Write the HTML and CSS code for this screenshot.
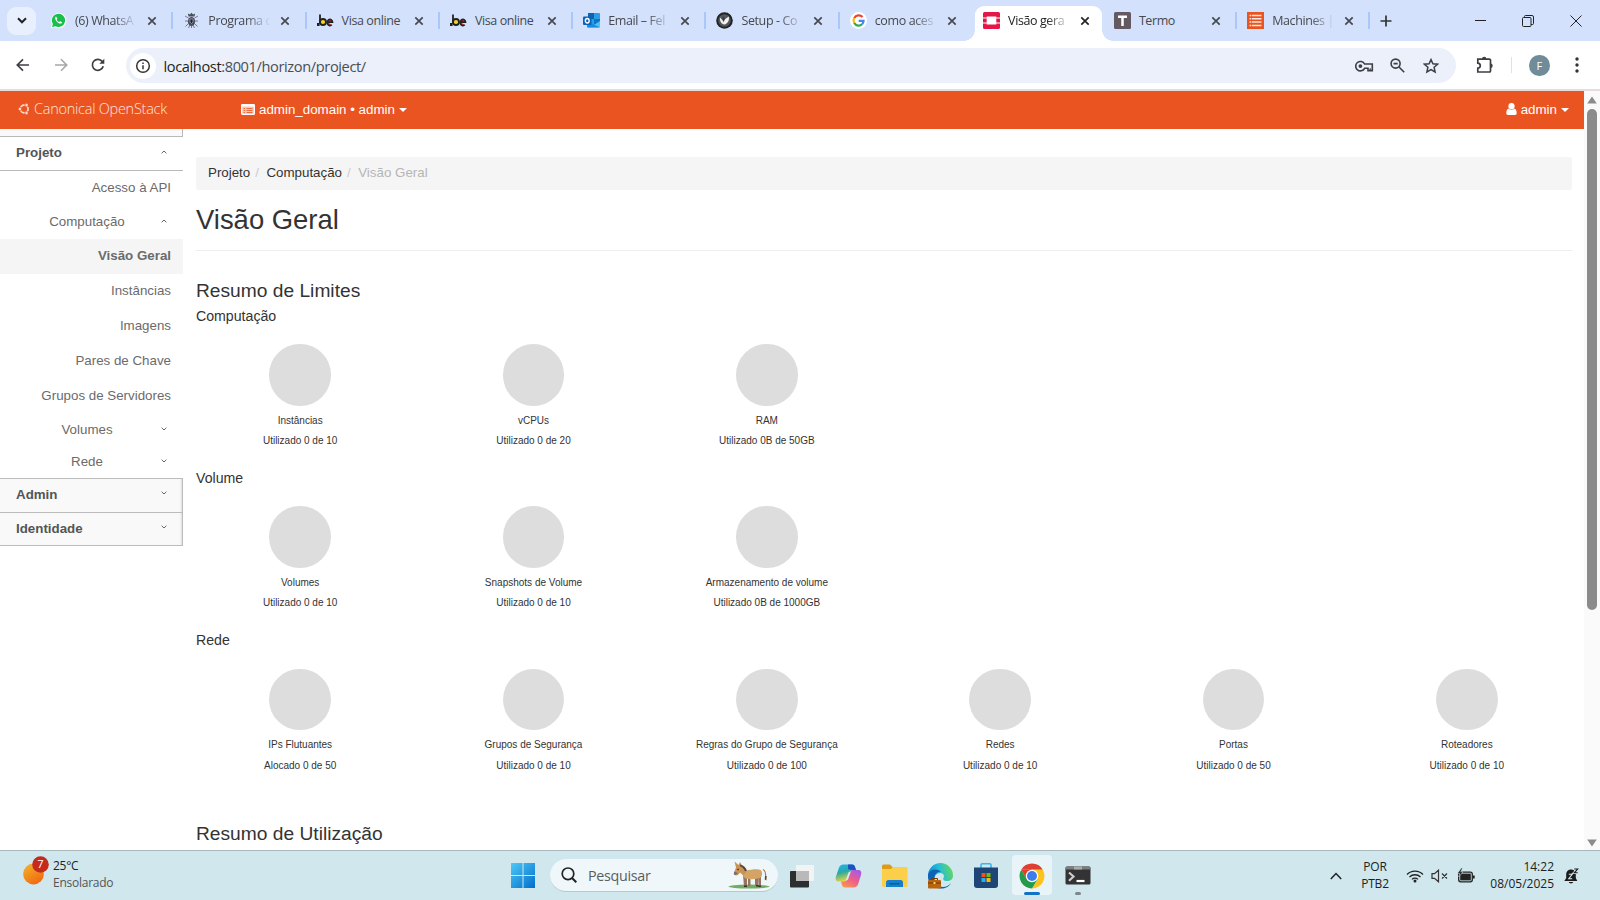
FILE: index.html
```html
<!DOCTYPE html>
<html lang="pt-BR">
<head>
<meta charset="utf-8">
<title>Visão geral</title>
<link rel="stylesheet" href="styles.css">
</head>
<body>
<svg width="0" height="0" class="defs">
  <symbol id="x" viewBox="0 0 10 10"><path d="M1.3 1.3l7.4 7.4M8.7 1.3L1.3 8.7" stroke="currentColor" stroke-width="1.7" fill="none"/></symbol>
  <symbol id="up" viewBox="0 0 6 4"><path d="M.6 3.3L3 1l2.400 2.300" stroke="currentColor" fill="none"/></symbol>
  <symbol id="down" viewBox="0 0 6 4"><path d="M.6 .7L3 3l2.400-2.300" stroke="currentColor" fill="none"/></symbol>
  <symbol id="be" viewBox="0 0 17 17"><path d="M3 2.500v9" stroke="#222" stroke-width="1.800"/><rect x="0" y="11" width="2.600" height="3" fill="#222"/><circle cx="6" cy="10" r="3" fill="#f5d522" stroke="#222" stroke-width="1.800"/><path d="M10.500 10.200h5a2.600 3.100 0 1 0-.8 2.600" fill="#e2363c" stroke="#222" stroke-width="1.700"/></symbol>
  <symbol id="g" viewBox="0 0 18 18"><circle cx="9" cy="9" r="9" fill="#fff"/><g fill="none" stroke-width="2.400"><path d="M13.200 5.400A5.300 5.300 0 0 0 4.500 6.300" stroke="#ea4335"/><path d="M4.500 6.300a5.300 5.300 0 0 0 0 5.400" stroke="#fbbc05"/><path d="M4.500 11.700a5.300 5.300 0 0 0 8.300 1.300" stroke="#34a853"/><path d="M12.800 13a5.300 5.300 0 0 0 1.500-3.500H9.200" stroke="#4285f4"/></g></symbol>
</svg>

<header class="tabs">
  <div class="tabmenu"><svg width="10" height="7" viewBox="0 0 10 7"><path d="M1 1.300l4 4 4-4" stroke="#222" stroke-width="2" fill="none"/></svg></div>
  <div class="tab"><svg class="fav" viewBox="0 0 17 17"><path d="M.8 16.300l1.200-4.300A7.600 7.600 0 1 1 5 15.200z" fill="#fff"/><path d="M2 15.100l.9-3.200A6.600 6.600 0 1 1 5.400 14.200z" fill="#18bf4c"/><path d="M6 4.500c-1.800 1.200-.3 4 1.200 5.400 1.700 1.600 4 2.500 5 .5l-1.900-1.200-1.200.9c-1.200-.5-2-1.300-2.500-2.400l.8-1z" fill="#fff"/></svg><span class="title fade">(6) WhatsA</span><svg class="close"><use href="#x"/></svg></div>
  <div class="tab"><svg class="fav" viewBox="0 0 17 17"><g stroke="#6b717d" stroke-width=".9" fill="none"><path d="M5.500 6L2 4M11.500 6L15 4M5 9H2M12 9h3M5.500 11.500L2.500 14.500M11.500 11.500l3 3M7 13l-1.500 3M10 13l1.500 3M8.500 13v3"/></g><ellipse cx="8.500" cy="9.500" rx="3.600" ry="4.600" fill="#4a4f5a"/><path d="M5.500 4.500l-.6-3 2 1L8.500.8l1.600 1.700 2-1-.6 3z" fill="#4a4f5a"/><path d="M7 7h3v3l-1.500 1.500L7 10z" fill="#20232b" stroke="#b9c0cd" stroke-width=".6"/></svg><span class="title fade">Programa d</span><svg class="close"><use href="#x"/></svg></div>
  <div class="tab"><svg class="fav"><use href="#be"/></svg><span class="title">Visa online</span><svg class="close"><use href="#x"/></svg></div>
  <div class="tab"><svg class="fav"><use href="#be"/></svg><span class="title">Visa online</span><svg class="close"><use href="#x"/></svg></div>
  <div class="tab"><svg class="fav" viewBox="0 0 17 17"><rect x="5" y="1" width="12" height="12" rx="1" fill="#28a0e8"/><path d="M5 1h6v6H5z" fill="#0f62b0"/><path d="M11 7h6v5h-6z" fill="#1373c6"/><path d="M4 9l7 4 6-4v5.500a1 1 0 0 1-1 1H5a1 1 0 0 1-1-1z" fill="#4dc3f5"/><path d="M4 9l13 6.500H5a1 1 0 0 1-1-1z" fill="#168be0"/><rect y="4.500" width="8.500" height="8.500" rx="1" fill="#0764b9"/><ellipse cx="4.250" cy="8.750" rx="1.900" ry="2.200" fill="none" stroke="#fff" stroke-width="1.400"/></svg><span class="title fade">Email – Fel</span><svg class="close"><use href="#x"/></svg></div>
  <div class="tab"><svg class="fav" viewBox="0 0 17 17"><circle cx="8.500" cy="8.500" r="8.300" fill="#222327"/><circle cx="8.500" cy="8.500" r="6.300" fill="#55565a"/><path d="M4 5.500l3.500 4L9.200 7l3.600-2.500c.8 3.500-.5 6.500-3.800 8H8C5 11.500 3.500 8.500 4 5.500z" fill="#f2f2f2"/><path d="M6.500 4.500L9 6l-1.500 4.500z" fill="#36373b"/></svg><span class="title fade">Setup - Co</span><svg class="close"><use href="#x"/></svg></div>
  <div class="tab last"><svg class="fav"><use href="#g"/></svg><span class="title fade">como aces</span><svg class="close"><use href="#x"/></svg></div>
  <div class="tab active"><svg class="fav" viewBox="0 0 17 17"><path d="M1.500 0h14A1.500 1.500 0 0 1 17 1.500V5.500H13.300V4.500H3.700v1H0v-4A1.500 1.500 0 0 1 1.500 0zM0 6.500h3.700v4H0zM13.300 6.500H17v4h-3.700zM0 11.500h3.700v1h9.600v-1H17v4a1.500 1.500 0 0 1-1.500 1.500h-14A1.500 1.500 0 0 1 0 15.500z" fill="#e5164a"/></svg><span class="title fade">Visão gera</span><svg class="close"><use href="#x"/></svg></div>
  <div class="tab"><svg class="fav" viewBox="0 0 17 17"><rect width="17" height="17" rx="1.500" fill="#645861"/><path d="M4 4.800h9M8.500 4v10" stroke="#fff" stroke-width="2.500"/></svg><span class="title">Termo</span><svg class="close"><use href="#x"/></svg></div>
  <div class="tab"><svg class="fav" viewBox="0 0 17 17"><rect width="17" height="17" fill="#e95420"/><path d="M2.500 3.500h12M2.500 6.800h12M2.500 10.100h12M2.500 13.400h12" stroke="#ffe6dc" stroke-width="1.500"/><path d="M4.500 2v13" stroke="#e95420" stroke-width=".7"/></svg><span class="title fade">Machines |</span><svg class="close"><use href="#x"/></svg></div>
  <svg class="plus" width="12" height="12" viewBox="0 0 12 12"><path d="M6 .5v11M.5 6h11" stroke="#333" stroke-width="1.700"/></svg>
  <div class="winctl">
    <svg width="11" height="12" viewBox="0 0 11 12"><path d="M0 5.500h11" stroke="#222"/></svg>
    <svg width="12" height="12" viewBox="0 0 12 12"><g fill="none" stroke="#222"><rect x=".5" y="2.500" width="8.500" height="9" rx="1"/><path d="M2.500 2.500V1.500a1 1 0 0 1 1-1H10a1.500 1.500 0 0 1 1.500 1.500v6.500a1 1 0 0 1-1 1H9"/></g></svg>
    <svg width="12" height="12" viewBox="0 0 12 12"><path d="M.5.5l11 11M11.500.5l-11 11" stroke="#222"/></svg>
  </div>
</header>

<nav class="toolbar">
  <svg class="tb" width="14" height="14" viewBox="0 0 14 14"><path d="M13 7H1.500M7 1.300L1.300 7 7 12.700" stroke="#3c3f43" stroke-width="1.700" fill="none"/></svg>
  <svg class="tb" width="14" height="14" viewBox="0 0 14 14"><path d="M1 7h11.500M7 1.300L12.700 7 7 12.700" stroke="#a4a6a9" stroke-width="1.600" fill="none"/></svg>
  <svg class="tb" width="14" height="14" viewBox="0 0 14 14"><path d="M12.200 8.200A5.500 5.500 0 1 1 11.300 3.500L12.300 4.600" stroke="#3c3f43" stroke-width="1.700" fill="none"/><path d="M13.300.7v5H8.300z" fill="#3c3f43"/></svg>
  <div class="omnibox">
    <span class="info"><svg width="16" height="16" viewBox="0 0 16 16"><circle cx="8" cy="8" r="6.300" stroke="#333" stroke-width="1.500" fill="none"/><path d="M8 7.200v4M8 4.500v1.600" stroke="#333" stroke-width="1.500"/></svg></span>
    <span class="url"><b>localhost</b>:8001/horizon/project/</span>
    <svg width="20" height="12" viewBox="0 0 20 12"><g fill="none" stroke="#3c3f43" stroke-width="1.600"><path d="M9.600 4A4.700 4.700 0 1 0 9.600 8.300H13v2.300h4.300V4z"/><path d="M15.200 10.500V8.300" stroke-width="1.200"/></g><circle cx="5.400" cy="6.100" r="1.900" fill="#3c3f43"/></svg>
    <svg class="lens" width="15" height="15" viewBox="0 0 15 15"><g fill="none" stroke="#3c3f43" stroke-width="1.600"><circle cx="5.600" cy="5.600" r="4.500"/><path d="M9 9l5.200 5.200M3.500 5.600h4.200"/></g></svg>
    <svg class="star" width="16" height="16" viewBox="0 0 16 16"><path d="M8 1.600l1.900 4.200 4.700.4-3.500 3.100 1 4.600L8 11.500l-4.100 2.400 1-4.600-3.500-3.100 4.700-.4z" stroke="#3c3f43" stroke-width="1.500" fill="none"/></svg>
  </div>
  <svg class="ext" width="18" height="18" viewBox="0 0 18 18"><path d="M1.800 3.200H13.500a1 1 0 0 1 1 1V15a1 1 0 0 1-1 1H1.800v-3.800c3.300-.4 3.300-4.600 0-5z" fill="none" stroke="#3c3f43" stroke-width="1.700"/><path d="M6 3a2.200 2.200 0 0 1 4.400 0zM14.500 7.500a2.200 2.200 0 0 1 0 4.400z" fill="#3c3f43"/></svg>
  <i class="tbsep"></i>
  <span class="avatar">F</span>
  <svg class="dots" width="4" height="16" viewBox="0 0 4 16"><g fill="#333"><circle cx="2" cy="2" r="1.700"/><circle cx="2" cy="8" r="1.700"/><circle cx="2" cy="14" r="1.700"/></g></svg>
</nav>

<div class="viewport">
  <div class="page">
    <div class="topbar">
      <svg class="cof" width="12" height="12" viewBox="0 0 12 12"><circle cx="6.200" cy="6" r="3.900" fill="none" stroke="#ffdccf" stroke-width="1.700"/><g fill="#ffdccf" stroke="#e95420" stroke-width=".7"><circle cx="1.900" cy="6" r="1.700"/><circle cx="8.500" cy="2" r="1.700"/><circle cx="8.500" cy="10" r="1.700"/></g></svg>
      <span class="brand">Canonical OpenStack</span>
      <div class="project"><svg width="14" height="11" viewBox="0 0 14 11"><rect x=".6" y=".6" width="12.800" height="9.800" rx="1" fill="#f9c9b8" stroke="#fff" stroke-width="1.200"/><path d="M0 1.500h14" stroke="#fff" stroke-width="2"/><path d="M2.500 4.500h1.500M5.500 4.500h6M2.500 6.500h1.500M5.500 6.500h6M2.500 8.500h1.500M5.500 8.500h6" stroke="#e95420" stroke-width=".8"/></svg><span>admin_domain • admin</span><i class="caret"></i></div>
      <div class="user"><svg width="11" height="12" viewBox="0 0 11 12"><circle cx="5.500" cy="3.200" r="3.100" fill="#fff"/><path d="M2.500 5.500C.8 6 .3 8 .3 10.300.3 11.300 1 12 2 12h7c1 0 1.700-.7 1.700-1.700 0-2.300-.5-4.300-2.200-4.800a4 4 0 0 1-6 0z" fill="#fff"/></svg><span>admin</span><i class="caret"></i></div>
    </div>
    <div class="body">
      <aside class="side">
        <div class="stub"></div>
        <div class="panel open">Projeto<svg class="chev"><use href="#up"/></svg></div>
        <div class="item">Acesso à API</div>
        <div class="group g1">Computação<svg class="chev"><use href="#up"/></svg></div>
        <div class="item current">Visão Geral</div>
        <div class="item">Instâncias</div>
        <div class="item">Imagens</div>
        <div class="item">Pares de Chave</div>
        <div class="item">Grupos de Servidores</div>
        <div class="group">Volumes<svg class="chev"><use href="#down"/></svg></div>
        <div class="group">Rede<svg class="chev"><use href="#down"/></svg></div>
        <div class="panel shut">Admin<svg class="chev"><use href="#down"/></svg></div>
        <div class="panel shut">Identidade<svg class="chev"><use href="#down"/></svg></div>
      </aside>
      <main class="main">
        <div class="crumbs"><span>Projeto</span><i>/</i><span>Computação</span><i>/</i><em>Visão Geral</em></div>
        <h1>Visão Geral</h1>
        <h2>Resumo de Limites</h2>
        <section>
          <h3>Computação</h3>
          <div class="charts">
            <div class="chart"><div class="pie"></div><p>Instâncias</p><p>Utilizado 0 de 10</p></div>
            <div class="chart"><div class="pie"></div><p>vCPUs</p><p>Utilizado 0 de 20</p></div>
            <div class="chart"><div class="pie"></div><p>RAM</p><p>Utilizado 0B de 50GB</p></div>
          </div>
        </section>
        <section>
          <h3>Volume</h3>
          <div class="charts">
            <div class="chart"><div class="pie"></div><p>Volumes</p><p>Utilizado 0 de 10</p></div>
            <div class="chart"><div class="pie"></div><p>Snapshots de Volume</p><p>Utilizado 0 de 10</p></div>
            <div class="chart"><div class="pie"></div><p>Armazenamento de volume</p><p>Utilizado 0B de 1000GB</p></div>
          </div>
        </section>
        <section>
          <h3>Rede</h3>
          <div class="charts">
            <div class="chart"><div class="pie"></div><p>IPs Flutuantes</p><p>Alocado 0 de 50</p></div>
            <div class="chart"><div class="pie"></div><p>Grupos de Segurança</p><p>Utilizado 0 de 10</p></div>
            <div class="chart"><div class="pie"></div><p>Regras do Grupo de Segurança</p><p>Utilizado 0 de 100</p></div>
            <div class="chart"><div class="pie"></div><p>Redes</p><p>Utilizado 0 de 10</p></div>
            <div class="chart"><div class="pie"></div><p>Portas</p><p>Utilizado 0 de 50</p></div>
            <div class="chart"><div class="pie"></div><p>Roteadores</p><p>Utilizado 0 de 10</p></div>
          </div>
        </section>
        <h2 class="usage">Resumo de Utilização</h2>
      </main>
    </div>
  </div>
  <div class="scroll">
    <svg width="10" height="8" viewBox="0 0 10 8"><path d="M5 .5L9.800 7.500H.2z" fill="#8b8b8b"/></svg>
    <div class="thumb"></div>
    <svg width="10" height="8" viewBox="0 0 10 8"><path d="M5 7.500L9.800.5H.2z" fill="#8b8b8b"/></svg>
  </div>
</div>

<footer class="taskbar">
  <div class="weather">
    <svg width="27" height="29" viewBox="0 0 27 29"><defs><linearGradient id="sun" x1="0" y1="0" x2=".6" y2="1"><stop offset="0" stop-color="#f3b72c"/><stop offset="1" stop-color="#f26a12"/></linearGradient></defs><circle cx="10.500" cy="18" r="10.400" fill="url(#sun)"/><circle cx="17.500" cy="8.500" r="8.300" fill="#c42b1c"/><text x="17.500" y="12.200" class="badge">7</text></svg>
    <div><div class="temp">25°C</div><div class="cond">Ensolarado</div></div>
  </div>
  <div class="apps">
    <svg class="win" width="24" height="25" viewBox="0 0 24 25"><defs><linearGradient id="w" x1="0" y1="0" x2="24" y2="25" gradientUnits="userSpaceOnUse"><stop offset="0" stop-color="#4cc8f8"/><stop offset="1" stop-color="#036dcb"/></linearGradient></defs><path d="M0 0h11.500v12H0zM12.500 0H24v12H12.500zM0 13h11.500v12H0zM12.500 13H24v12H12.500z" fill="url(#w)"/></svg>
    <div class="search">
      <svg width="16" height="16" viewBox="0 0 16 16"><circle cx="7" cy="6.800" r="5.800" fill="none" stroke="#222" stroke-width="1.700"/><path d="M11 11l4.300 4.300" stroke="#222" stroke-width="2"/></svg>
      <span>Pesquisar</span>
      <svg width="42" height="28" viewBox="0 0 42 28"><ellipse cx="21" cy="25.600" rx="20.500" ry="2" fill="#6fae62"/><path d="M35 8.500c3 1 3 5 2.500 10" stroke="#a37b50" stroke-width="1.200" fill="none"/><path d="M37 15l1.700 0-.4 4.500-1.500-1z" fill="#5c4638"/><path d="M15 14h4v11.500h-3zM20 15h2.500v10H20zM27 15h3v9.500h-3zM30 14h3v11h-2.500z" fill="#96745f"/><path d="M13.500 8L18 9.500c5-1 12-2 14.500-.5 2.500 2 2 6.500-.5 8-5 1.300-10 1.500-13.500.7-3.500-1.300-4.500-4.200-5-9.700z" fill="#d3a465"/><path d="M8 6.500L6.500.5 10.500 4l1.500-3 2.500 4.500 4 5-3 4-3.500-3c-1.500 2.500-3.500 3.500-5.500 2.500-1.500-1 .5-4.500 1.500-7.500z" fill="#c89455"/><path d="M12 3.500c3.500.5 5.500 3 7 6l-2 .7c-1.200-2.700-2.800-4.200-5-5z" fill="#5c4638"/><path d="M6.300 10.500l3.500 1.500c-1.500 2.300-4 2.300-4 .5z" fill="#7c6a78"/><circle cx="10" cy="8.500" r=".8" fill="#222"/><path d="M16 24.500h3v1.500h-3zM28 24h2.500v1.500H28zM30.500 24.500H33V26h-2.500z" fill="#3b302f"/></svg>
    </div>
    <div class="app"><svg width="26" height="26" viewBox="0 0 26 26"><rect x="1" y="8" width="19" height="16.500" rx="1" fill="#2d2e30"/><rect x="7" y="2" width="18" height="16" rx="1" fill="#f4f4f4" opacity=".93"/><path d="M7 8h13v10H7z" fill="#b9b9ba"/></svg></div>
    <div class="app"><svg width="27" height="26" viewBox="0 0 27 26"><defs><linearGradient id="c1" x1="0" y1="0" x2=".3" y2="1"><stop offset="0" stop-color="#1fb6f2"/><stop offset=".5" stop-color="#2ba9a5"/><stop offset="1" stop-color="#e8d53c"/></linearGradient><linearGradient id="c2" x1=".8" y1="0" x2=".2" y2="1"><stop offset="0" stop-color="#a45ae8"/><stop offset=".5" stop-color="#ec5d8c"/><stop offset="1" stop-color="#fb9650"/></linearGradient></defs><path d="M10 1.500h7c2 0 2.600 1 3.200 3l.8 2.500h-3c-2 0-2.500 1-3 2.500L12.500 16c-.6 1.700-1.500 2.500-3.500 2.500H4c-3 0-3.800-2-3-5L4 4.500C5 2 7 1.500 10 1.500z" fill="url(#c1)"/><path d="M13 1.500h4c2 0 2.600 1 3.200 3l.8 2.500h-5l-3-1z" fill="#2150c5"/><path d="M17 24.500h-7c-2 0-2.600-1-3.200-3L6 18.500h3c2 0 2.500-1 3-2.500l2.500-6.500C15 8 16 7 18 7h5c3 0 3.800 2 3 5l-3 9.500c-1 2.500-3 3-6 3z" fill="url(#c2)"/><path d="M13.500 9.500L16 8l-3 8.500-2.500 1.500z" fill="#d7ebf0"/></svg></div>
    <div class="app"><svg width="27" height="25" viewBox="0 0 27 25"><path d="M1 3a1.500 1.500 0 0 1 1.500-1.500H9l3 3V8H1z" fill="#dd9c13"/><path d="M1 6h9l2-2h13.500a1 1 0 0 1 1 1v17.500a1.500 1.500 0 0 1-1.500 1.500H2.500A1.500 1.500 0 0 1 1 22.500z" fill="#fccf4b"/><path d="M5 24v-4.500A2.500 2.500 0 0 1 7.500 17h12a2.500 2.500 0 0 1 2.500 2.500V24z" fill="#1780ce"/><path d="M8.500 20h10v1.500h-10z" fill="#0f5c99"/></svg></div>
    <div class="app"><svg width="27" height="27" viewBox="0 0 27 27"><defs><linearGradient id="e" x1="0" y1=".6" x2="1" y2=".3"><stop offset="0" stop-color="#0b7fd0"/><stop offset=".5" stop-color="#27bcd8"/><stop offset="1" stop-color="#62d95c"/></linearGradient></defs><path d="M1 13.500a12.500 12.500 0 0 1 25 0c0 4-2.500 5.500-6 5.500-3 0-4.500-1.500-3.500-3 1.500-2.500-.5-5-3.500-5-4 0-6.500 4-5.500 8.500S12 25.500 14 26A12.500 12.500 0 0 1 1 13.500z" fill="url(#e)"/><path d="M1 13c2-6 9-7 13-3-4-1-7 3-6.500 7 .5 5 4 8 8.500 8 3.500 0 6.500-2 8-4-2 4-6 5.500-9.500 5.500A12.700 12.700 0 0 1 1 13z" fill="#0d62b6"/><rect x="1" y="18" width="13" height="8.500" rx="1" fill="#b9640f"/><path d="M4.500 18v-1.500h6V18M1 21h13" stroke="#70390a" fill="none"/><rect x="6.500" y="20" width="2" height="2" fill="#ffd35c"/></svg></div>
    <div class="app"><svg width="26" height="27" viewBox="0 0 26 27"><path d="M8 6V3a1.300 1.300 0 0 1 1.300-1.300h7.400A1.300 1.300 0 0 1 18 3v3" fill="none" stroke="#35b8ec" stroke-width="1.600"/><path d="M1 5.500h24V23a3 3 0 0 1-3 3H4a3 3 0 0 1-3-3z" fill="#1d4576"/><path d="M8.500 11H12.500V15H8.500z" fill="#f25022"/><path d="M13.500 11H17.500V15H13.500z" fill="#7fba00"/><path d="M8.500 16H12.500V20H8.500z" fill="#27aef0"/><path d="M13.500 16H17.500V20H13.500z" fill="#ffb900"/></svg></div>
    <div class="app on"><svg width="26" height="26" viewBox="0 0 26 26"><path d="M13 .5A12.500 12.500 0 0 1 23.800 6.750H13L2.200 6.750A12.500 12.500 0 0 1 13 .5z" fill="#dd3f31"/><path d="M2.200 6.750H13L7.600 16.200z" fill="#dd3f31"/><path d="M23.800 6.750A12.500 12.500 0 0 1 13 25.500L18.400 16.200 13 6.750z" fill="#fcc31e"/><path d="M13 25.500A12.500 12.500 0 0 1 2.200 6.750L7.600 16.200 18.400 16.200z" fill="#269a4a"/><circle cx="13" cy="13" r="6.200" fill="#fff"/><circle cx="13" cy="13" r="5" fill="#3b7ded"/></svg><i class="run"></i></div>
    <div class="app"><svg width="26" height="19" viewBox="0 0 26 19"><rect x=".5" y=".5" width="25" height="18" rx="1.500" fill="#333"/><path d="M.5 3.500V2A1.500 1.500 0 0 1 2 .5h22A1.500 1.500 0 0 1 25.500 2v1.500z" fill="#7d7d7d"/><path d="M9 .5h8v3H9z" fill="#aaa"/><path d="M4 6.500l4.500 4L4 14.800" stroke="#ccc" stroke-width="2.200" fill="none"/><path d="M11.500 15h8" stroke="#fff" stroke-width="2.200"/></svg><i class="run idle"></i></div>
  </div>
  <div class="tray">
    <svg class="tup" width="12" height="8" viewBox="0 0 12 8"><path d="M.8 7L6 1.500 11.200 7" stroke="#222" stroke-width="1.500" fill="none"/></svg>
    <div class="lang"><div>POR</div><div>PTB2</div></div>
    <svg class="wifi" width="18" height="14" viewBox="0 0 18 14"><g fill="none" stroke="#222" stroke-width="1.300"><path d="M1 5.500a11.300 11.300 0 0 1 16 0M3.500 8a7.800 7.800 0 0 1 11 0M6 10.400a4.300 4.300 0 0 1 6 0"/></g><circle cx="9" cy="12" r="1.500" fill="#222"/></svg>
    <svg class="vol" width="18" height="14" viewBox="0 0 18 14"><g fill="none" stroke="#333" stroke-width="1.200"><path d="M1 4.700h2.500L7.500 1.200v11.600L3.500 9.300H1zM11 4.500l5 5M16 4.500l-5 5"/></g></svg>
    <svg class="bat" width="18" height="15" viewBox="0 0 18 15"><rect x="1.700" y="4.200" width="13.600" height="9.600" rx="2" fill="none" stroke="#222" stroke-width="1.300"/><rect x="3.200" y="5.600" width="10.600" height="6.800" fill="#222"/><path d="M16 7.500h1.700v3H16z" fill="#222"/><path d="M4.300 0L.5 5.500h2.300L1.700 9 6 4H3.700L5.500 0z" fill="#222" stroke="#cfe7ed" stroke-width=".5"/></svg>
    <div class="clock"><div>14:22</div><div>08/05/2025</div></div>
    <svg class="bell" width="15" height="16" viewBox="0 0 15 16"><path d="M7 1.500c-3 0-4.800 2.300-4.800 5V10L.3 13h13L11.800 10V6.500c0-2.700-1.800-5-4.800-5zM4.700 14h4.600a2.400 2 0 0 1-4.600 0z" fill="#1c1c1c"/><path d="M10.300 1h3.400l-3.400 3.800h3.400" stroke="#cfe7ed" stroke-width="2.600" fill="none"/><path d="M10.300 1h3.400l-3.400 3.800h3.400" stroke="#1c1c1c" stroke-width="1.100" fill="none"/><path d="M4.800 6.300h3.400L4.800 10.700h3.400" stroke="#dceef2" stroke-width="1.100" fill="none"/></svg>
  </div>
</footer>
</body>
</html>
```
FILE: styles.css
```css
* { box-sizing: border-box; }
body { margin: 0; width: 1600px; height: 900px; overflow: hidden; display: flex; flex-direction: column; background: #fff; font-family: "Liberation Sans", Arial, sans-serif; color: #333; }
.defs { position: absolute; }
svg { flex: none; display: block; }
i { font-style: normal; }

.tabs { height: 41px; flex: none; display: flex; align-items: center; background: #d3e1fc; padding-left: 7px; font-family: "Open Sans", sans-serif; }
.tabmenu { width: 29px; height: 28px; border-radius: 9px; background: #e9f0fd; display: flex; align-items: center; justify-content: center; margin-right: 5px; }
.tab { width: 133.300px; height: 41px; flex: none; display: flex; align-items: center; padding-left: 9px; position: relative; color: #46494e; }
.tab::after { content: ""; position: absolute; right: 1px; top: 12px; width: 2px; height: 17px; background: #a9c7f9; }
.tab.last::after { display: none; }
.fav { width: 17px; height: 17px; margin-right: 8px; }
.title { width: 64px; white-space: nowrap; font-size: 12.500px; letter-spacing: -.4px; line-height: 20px; }
.fade { -webkit-mask-image: linear-gradient(90deg, #000 60%, transparent 98%); mask-image: linear-gradient(90deg, #000 60%, transparent 98%); }
.close { width: 10px; height: 10px; margin-left: 8px; }
.tab.active { color: #222; margin-right: -2.500px; }
.tab.active > * { z-index: 1; }
.tab.active::before { content: ""; position: absolute; left: 1px; top: 6px; width: 127px; height: 35px; background: #fff; border-radius: 9px 9px 0 0; }
.tab.active::after { left: -10px; right: auto; top: 30px; width: 149px; height: 11px; background: radial-gradient(circle at 0 0, transparent 10.500px, #fff 11px) left / 11px 11px no-repeat, radial-gradient(circle at 100% 0, transparent 10.500px, #fff 11px) right / 11px 11px no-repeat; }
.plus { margin-left: 9px; }
.winctl { display: flex; gap: 36px; margin-left: auto; padding-right: 18px; }

.toolbar { height: 48px; flex: none; display: flex; align-items: center; background: #fff; padding: 0 21px 0 16px; }
.tb { margin-right: 23.500px; }
.tb:nth-child(3) { margin-right: 20.500px; }
.omnibox { width: 1330px; height: 35px; margin-top: 1px; flex: none; border-radius: 18px; background: #ebf0fa; display: flex; align-items: center; padding: 0 17px 0 4px; }
.info { width: 26px; height: 26px; border-radius: 50%; background: #fff; display: flex; align-items: center; justify-content: center; margin-right: 8px; }
.url { font: 14.600px/22px "Open Sans", sans-serif; color: #4a4d51; flex: 1; letter-spacing: -.38px; }
.url b { font-weight: 400; color: #1d1f22; }
.lens { margin-left: 15px; }
.star { margin-left: 17.500px; }
.ext { margin-left: 20px; }
.tbsep { width: 2px; height: 16px; background: #d3e3fd; margin: 0 17px 0 17px; }
.avatar { width: 21px; height: 21px; border-radius: 50%; background: #6f8c98; color: #fff; font: 11px/21px "Open Sans", sans-serif; text-align: center; }
.dots { margin-left: 25.500px; }

.viewport { height: 761px; flex: none; display: flex; border-top: 2px solid #e6dcdb; }
.page { width: 1584px; overflow: hidden; }
.topbar { height: 38px; background: #e95420; color: #fff; display: flex; align-items: center; padding: 0 15px 2px 18px; font-size: 13.350px; }
.brand { font: 300 14.500px/20px "Open Sans", sans-serif; width: 207px; margin-left: 4px; white-space: nowrap; letter-spacing: -.25px; color: #ffe5dc; }
.project, .user { display: flex; align-items: center; }
.project span, .user span { margin: 0 4px 0 4px; line-height: 17px; }
.user { margin-left: auto; }
.caret { border: 4px solid transparent; border-top: 4.500px solid #fff; border-bottom: 0; margin-top: 1px; }

.body { display: flex; height: 721px; }
.side { width: 184px; flex: none; font-size: 13.330px; color: #6b6b6b; }
.stub { width: 183px; height: 8px; background: #f9f9f9; border: solid #b9b9b9; border-width: 0 1px 1px 0; }
.panel { position: relative; width: 183px; height: 33.500px; font-weight: 700; color: #555; padding-left: 16px; line-height: 31px; }
.open { border-bottom: 1px solid #b9b9b9; height: 34px; line-height: 32px; }
.shut { background: #f9f9f9; border: solid #bcbcbc; border-width: 1px 1px 0 0; box-shadow: inset -2px 0 2px -1px #ddd; }
.shut:last-child { border-bottom-width: 1px; height: 34px; }
.item { width: 183px; height: 34.900px; line-height: 34px; text-align: right; padding-right: 12px; }
.item.current { background: #f5f5f5; font-weight: 700; }
.group { position: relative; height: 32.300px; line-height: 32px; text-align: center; width: 174px; }
.g1 { height: 33.300px; }
.chev { position: absolute; left: 161px; top: 13px; width: 6px; height: 4px; color: #666; }
.shut .chev { top: 12px; }

.main { flex: 1; padding-left: 12px; }
.crumbs { margin-top: 28px; width: 1376px; height: 33px; line-height: 31px; background: #f5f5f5; border-radius: 3px; padding-left: 12px; font-size: 13.330px; display: flex; white-space: nowrap; }
.crumbs i { color: #ccc; margin: 0 7.500px 0 5px; }
.crumbs em { font-style: normal; color: #b5b5b5; }
h1 { margin: 0; width: 1376px; height: 61px; font-size: 27.450px; line-height: 60px; font-weight: 400; border-bottom: 1px solid #eee; }
h2 { margin: 26px 0 0; height: 27.500px; font-size: 19.200px; line-height: 27px; font-weight: 400; }
h3 { margin: 0; height: 24px; font-size: 14.150px; line-height: 23px; font-weight: 400; }
section { height: 162.400px; }
.charts { display: flex; margin-left: -12.500px; padding-top: 15.500px; }
.chart { width: 233.330px; text-align: center; flex: none; }
.pie { width: 61.500px; height: 61.500px; border-radius: 50%; background: #ddd; margin: 0 auto 5.200px; }
p { margin: 0; font-size: 10px; line-height: 20.300px; white-space: nowrap; }
.usage { margin-top: 28.500px; }

.scroll { width: 16px; background: #fafafa; display: flex; flex-direction: column; align-items: center; padding: 5px 0 3px; }
.thumb { width: 10px; height: 501px; border-radius: 5px; background: #8b8b8b; margin: 5px 0 auto; }

.taskbar { height: 50px; flex: none; background: #cfe7ed; border-top: 1px solid #a7b7bb; display: flex; font-family: "Open Sans", sans-serif; font-size: 12px; color: #222; }
.weather { display: flex; padding: 5px 0 0 23px; width: 511px; }
.weather > div { margin-left: 3px; margin-top: 1px; line-height: 17px; letter-spacing: -.25px; }
.cond { color: #555; }
.badge { font: 11px "Open Sans", sans-serif; fill: #fff; text-anchor: middle; }
.apps { display: flex; align-items: center; }
.search { width: 228px; height: 33px; border-radius: 17px; background: #eff7fa; border-bottom: 1px solid #b4c8cd; margin: 0 1px 0 15px; display: flex; align-items: center; padding: 0 8px 0 11px; }
.search span { flex: 1; font-size: 14.300px; color: #5a5d60; margin-left: 11px; letter-spacing: -.3px; }
.app { width: 46px; height: 49px; display: flex; align-items: center; justify-content: center; position: relative; }
.app.on::before { content: ""; position: absolute; left: 3px; top: 4px; width: 40px; height: 40px; border-radius: 4px; background: #e9f4f8; }
.app svg { position: relative; }
.run { position: absolute; left: 15px; top: 41px; width: 16px; height: 3px; border-radius: 2px; background: #1273c4; }
.run.idle { left: 20px; width: 6px; background: #7c888b; }
.tray { margin-left: auto; display: flex; align-items: center; padding-right: 21px; }
.lang, .clock { line-height: 17px; text-align: center; margin-top: -2px; }
.lang { width: 30px; margin-left: 18px; letter-spacing: -.2px; }
.wifi { margin-left: 16px; }
.vol { margin-left: 7px; }
.bat { margin-left: 8px; }
.clock { text-align: right; width: 66px; margin-left: 13px; letter-spacing: 0; white-space: nowrap; }
.bell { margin-left: 10px; }
```
